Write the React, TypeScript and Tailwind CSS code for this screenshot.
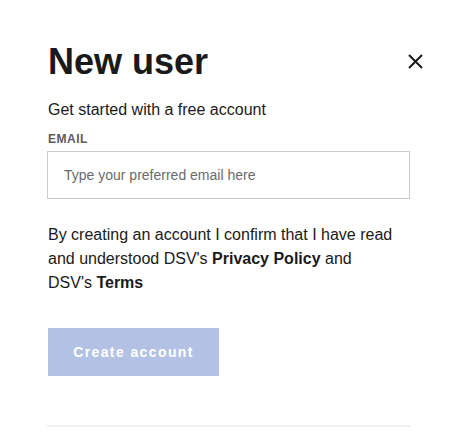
import React from "react";

export default function App() {
  return (
    <div
      className="w-[460px] h-[447px] bg-white overflow-hidden"
      style={{ fontFamily: '"Liberation Sans", Arial, sans-serif' }}
    >
      <div className="pl-[47px] pr-[50px] pt-[40px]">
        <div className="flex items-center justify-between -mr-[17px]">
          <h1 className="text-[36px] leading-[43px] font-bold text-[#1a1a1a] pl-[1px]">New user</h1>
          <button className="w-6 h-6 flex items-center justify-center text-[#1a1a1a]" aria-label="Close">
            <svg width="15" height="15" viewBox="0 0 15 15" fill="none">
              <path d="M1 1L14 14M14 1L1 14" stroke="currentColor" strokeWidth="2" />
            </svg>
          </button>
        </div>
        <p className="mt-[15px] text-[16px] leading-[24px] text-[#1a1a1a] pl-[1px]">
          Get started with a free account
        </p>
        <label className="block mt-[9px] text-[12px] leading-[16px] font-bold tracking-[0.5px] text-[#5c5c5c] pl-[1px]">
          EMAIL
        </label>
        <input
          type="email"
          placeholder="Type your preferred email here"
          className="block mt-1 w-full h-[48px] border border-[#cccccc] px-[16px] text-[14px] text-[#1a1a1a] placeholder:text-[#6b6b6b] outline-none"
        />
        <p className="mt-6 w-[350px] text-[16px] leading-[24px] text-[#1a1a1a] pl-[1px]">
          By creating an account I confirm that I have read and understood DSV's{" "}
          <span className="font-bold">Privacy Policy</span> and DSV's{" "}
          <span className="font-bold">Terms</span>
        </p>
        <button className="mt-[33px] ml-[1px] w-[171px] h-[48px] bg-[#b3c2e4] text-white text-[14px] font-bold tracking-[1.4px] flex items-center justify-center">
          Create account
        </button>
        <div className="mt-[49px] h-[2px] bg-[#f0f0f5]" />
      </div>
    </div>
  );
}
